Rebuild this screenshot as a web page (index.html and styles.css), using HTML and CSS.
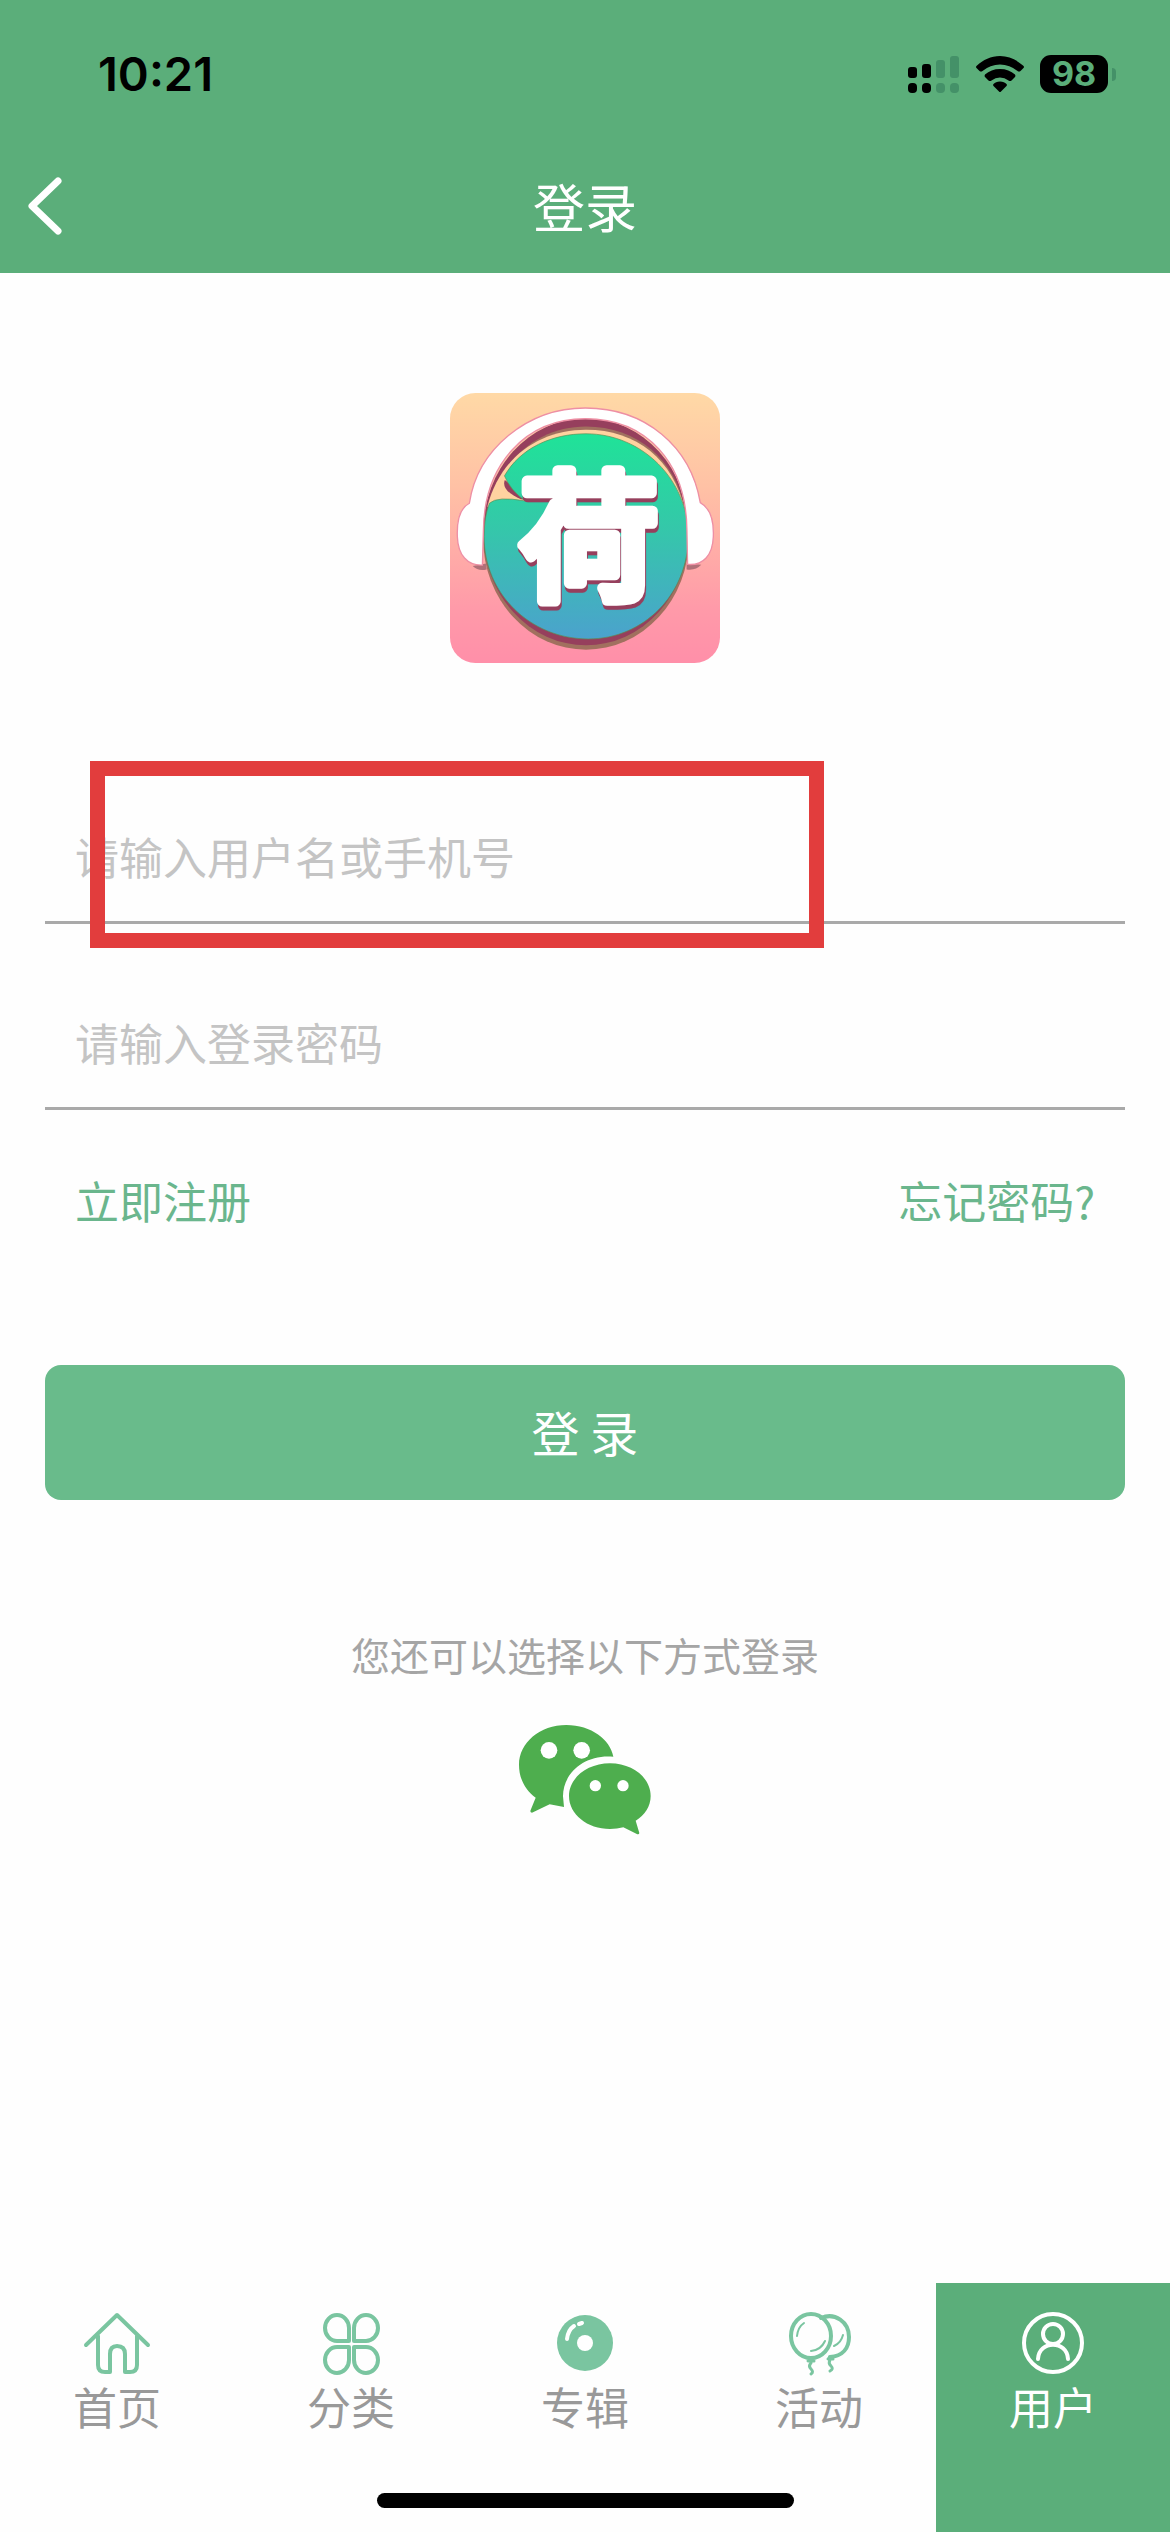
FILE: index.html
```html
<!DOCTYPE html>
<html lang="zh-CN">
<head>
<meta charset="utf-8">
<meta name="viewport" content="width=device-width, initial-scale=1">
<title>登录</title>
<link rel="stylesheet" href="styles.css">
</head>
<body>
<header class="header">
  <div class="status">
    <span class="time">10:21</span>
    <div class="status-icons">
      <svg class="signal" width="52" height="38" viewBox="0 0 52 38" aria-hidden="true">
        <rect x="0" y="12" width="9" height="11" rx="3"/><rect x="14" y="9" width="9" height="14" rx="3"/>
        <rect x="0" y="28" width="9" height="10" rx="4"/><rect x="14" y="28" width="9" height="10" rx="4"/>
        <g fill="#449168"><rect x="28" y="5" width="9" height="18" rx="3"/><rect x="42" y="1" width="9" height="22" rx="3"/><rect x="28" y="28" width="9" height="10" rx="4"/><rect x="42" y="28" width="9" height="10" rx="4"/></g>
      </svg>
      <svg class="wifi" width="48" height="37" viewBox="0 0 48 37" aria-hidden="true">
        <path d="M24 0C33 0 41 4 47 9.500Q49 11 47 12.500L44.500 15Q43 16 41.500 15A27 27 0 0 0 6.500 15Q5 16 3.500 15L1 12.500Q-1 11 1 9.500C7 4 15 0 24 0Z"/>
        <path d="M24 13C30 13 35 15 39 18.500Q40 20 39 21L35.500 24.500Q34 25.500 32.500 24.500A14 14 0 0 0 15.500 24.500Q14 25.500 12.500 24.500L9 21Q8 20 9 18.500C13 15 18 13 24 13Z"/>
        <path d="M24 25.500C27 25.500 29 26.500 30.500 28Q31.500 29 30.500 30L25 35.500Q24 36.500 23 35.500L17.500 30Q16.500 29 17.500 28C19 26.500 21 25.500 24 25.500Z"/>
      </svg>
      <div class="battery"><span class="level">98</span><span class="nub"></span></div>
    </div>
  </div>
  <div class="titlebar">
    <button class="back" type="button" aria-label="返回">
      <svg width="34" height="58" viewBox="0 0 34 58" aria-hidden="true"><path d="M30 4L4 29L30 54" fill="none" stroke="#fff" stroke-width="7" stroke-linecap="round" stroke-linejoin="round"/></svg>
    </button>
    <h1 class="title">登录</h1>
  </div>
</header>

<main class="main">
  <svg class="logo" viewBox="60 70 808 808" role="img" aria-label="荷">
    <defs>
      <linearGradient id="bg" x1="0" y1="0" x2="0" y2="1"><stop offset="0" stop-color="#ffd9a6"/><stop offset=".35" stop-color="#ffc1a5"/><stop offset=".8" stop-color="#ff9aa9"/><stop offset="1" stop-color="#ff8fa9"/></linearGradient>
      <linearGradient id="leaf" x1="0" y1="0" x2="0" y2="1"><stop offset="0" stop-color="#1fe398"/><stop offset=".45" stop-color="#34c8a9"/><stop offset="1" stop-color="#4ba2cd"/></linearGradient>
    </defs>
    <rect x="60" y="70" width="808" height="808" rx="76" fill="url(#bg)"/>
    <path d="M128 588Q145 605 170 598L168 580ZM768 580L768 598Q795 602 812 584Z" fill="#b07078"/>
    <ellipse cx="467" cy="505" rx="308" ry="333" fill="#a1705f"/>
    <ellipse cx="467" cy="485" rx="308" ry="340" fill="#963f5d"/>
    <path d="M185 390C225 250 340 170 467 170C620 170 735 270 762 415L740 470L200 440Z" fill="#a1705f"/>
    <path d="M172 410C210 260 330 180 467 180C620 180 730 270 764 425L740 470L200 440Z" fill="#ffd2a0"/>
    <path d="M224 330Q212 362 272 388L295 390L250 350Z" fill="#963f5d"/>
    <path d="M467 192C635 192 773 330 773 498C773 672 640 806 474 806C300 806 162 670 162 500Q162 440 178 400Q200 378 285 393Q240 360 223 318C270 235 365 192 467 192Z" fill="url(#leaf)" stroke="#5b8f54" stroke-width="2"/>
    <path d="M157 585C112 587 84 555 82 500C80 450 88 415 118 400C142 240 290 115 465 115C645 115 780 230 809 398C840 415 850 450 848 500C846 555 818 587 771 583L769 480C767 280 650 147 465 147C285 147 162 285 160 480Z" fill="#fff" stroke="#ee8fa4" stroke-width="4"/>
    <text class="logo-glyph" x="476" y="658" text-anchor="middle">荷</text>
  </svg>

  <form class="form">
    <div class="field">
      <input class="input" type="text" placeholder="请输入用户名或手机号" aria-label="用户名或手机号">
      <span class="highlight"></span>
    </div>
    <div class="field">
      <input class="input" type="password" placeholder="请输入登录密码" aria-label="登录密码">
    </div>
    <div class="links">
      <a class="link" href="#">立即注册</a>
      <a class="link" href="#">忘记密码?</a>
    </div>
    <button class="submit" type="button">登 录</button>
  </form>

  <p class="hint">您还可以选择以下方式登录</p>
  <button class="wechat" type="button" aria-label="微信登录">
    <svg width="134" height="112" viewBox="535 318 402 336" aria-hidden="true">
      <path fill="#4eae4e" d="M680 321C755 321 812 365 821 416C735 408 670 465 670 535L673 567L630 559L577 584Q570 584 573 576L588 539C555 515 538 480 538 440C538 374 601 321 680 321Z"/>
      <path fill="#4eae4e" d="M811 436C878 436 933 479 933 534C933 565 915 592 888 608L899 645Q898 651 890 647L851 628Q832 633 811 633C743 633 688 589 688 534C688 480 743 436 811 436Z"/>
      <g fill="#fff"><circle cx="628" cy="397" r="25"/><circle cx="726" cy="397" r="25"/><circle cx="767" cy="503" r="17"/><circle cx="850" cy="503" r="17"/></g>
    </svg>
  </button>
</main>

<nav class="tabs">
  <a class="tab" href="#">
    <svg class="icon" viewBox="0 0 72 72" aria-hidden="true"><path d="M5 38L36 8L67 38M17 29V58Q17 65 24 65H29V47Q29 39 36 39Q44 39 44 47V65H49Q56 65 56 58V29"/></svg>
    <span>首页</span>
  </a>
  <a class="tab" href="#">
    <svg class="icon" viewBox="0 0 72 72" aria-hidden="true"><path d="M34 34H22A12 13 0 1 1 34 21ZM39 34H51A12 13 0 1 0 39 21ZM34 40H22A12 13 0 1 0 34 53ZM39 40H51A12 13 0 1 1 39 53Z"/></svg>
    <span>分类</span>
  </a>
  <a class="tab" href="#">
    <svg class="icon" viewBox="0 0 72 72" aria-hidden="true"><circle class="disc" cx="36" cy="36" r="28"/><circle cx="36" cy="36" r="8" fill="#fff" stroke="none"/><path d="M18 32Q19 23 25 19M30 17L33 16" stroke="#fff"/></svg>
    <span>专辑</span>
  </a>
  <a class="tab" href="#">
    <svg class="icon" viewBox="0 0 72 72" aria-hidden="true"><ellipse cx="28" cy="29" rx="20" ry="22"/><path d="M38 11C52 5 66 15 66 30C66 41 60 49 47 50"/><path d="M28 52L25 54H31ZM47 50L45 52H50M28 56Q25 59 28 62T28 67M47 53Q45 56 48 59T47 64" stroke-width="3"/><path d="M14 29Q15 20 21 16M28 44Q38 43 42 34M51 39Q58 36 60 28" stroke-width="2"/></svg>
    <span>活动</span>
  </a>
  <a class="tab active" href="#" aria-current="page">
    <svg class="icon" viewBox="0 0 72 72" aria-hidden="true"><circle cx="36" cy="36" r="29"/><circle cx="36" cy="27" r="10"/><path d="M21 52C22 33 50 33 51 52"/></svg>
    <span>用户</span>
  </a>
  <div class="home-indicator"></div>
</nav>
</body>
</html>
```
FILE: styles.css
```css
* {
  box-sizing: border-box;
}

body {
  margin: 0;
  min-height: 100vh;
  display: flex;
  flex-direction: column;
  background: #fefefe;
  font-family: "Noto Sans CJK SC", sans-serif;
  font-size: 44px;
  line-height: 60px;
}

button,
input {
  font: inherit;
  border: 0;
  padding: 0;
  background: none;
}

a {
  text-decoration: none;
}

svg {
  display: block;
}

.header {
  background: #5bae7a;
}

.status {
  display: flex;
  align-items: center;
  justify-content: space-between;
  height: 148px;
  padding: 0 54px 0 98px;
}

.time {
  font-family: Inter, sans-serif;
  font-size: 47px;
  font-weight: 600;
}

.status-icons {
  display: flex;
  align-items: center;
  gap: 16px;
}

.battery {
  display: flex;
  align-items: center;
  gap: 4px;
}

.level {
  width: 68px;
  height: 38px;
  border-radius: 11px;
  background: #000;
  color: #5bae7a;
  font-family: Inter, sans-serif;
  font-size: 34px;
  font-weight: 700;
  line-height: 38px;
  text-align: center;
}

.nub {
  width: 4px;
  height: 13px;
  border-radius: 0 4px 4px 0;
  background: #449168;
}

.titlebar {
  display: grid;
  grid-template-columns: 1fr auto 1fr;
  align-items: center;
  height: 125px;
  padding: 0 28px 10px;
}

.back {
  width: 34px;
}

.title {
  margin: 0;
  color: #fff;
  font-size: 52px;
  font-weight: 400;
}

.main {
  flex: 1;
  display: flex;
  flex-direction: column;
  align-items: center;
  padding: 120px 45px 60px;
}

.logo {
  width: 270px;
  height: 270px;
}

.logo-glyph {
  fill: #fff;
  stroke: #fff;
  stroke-width: 32px;
  stroke-linejoin: round;
  font-size: 420px;
  font-weight: 500;
  filter: drop-shadow(3px 12px 0 #963f5d);
}

.form {
  align-self: stretch;
  display: flex;
  flex-direction: column;
  margin-top: 132px;
}

.field {
  position: relative;
  margin-bottom: 57px;
}

.input {
  display: block;
  width: 100%;
  height: 129px;
  padding: 0 30px 4px;
  border-bottom: 3px solid #a9a9a9;
  border-radius: 0;
  outline: 0;
}

.input::placeholder {
  color: #c4c4c4;
  opacity: 1;
}

.highlight {
  position: absolute;
  top: -34px;
  left: 45px;
  width: 68%;
  height: 187px;
  border: 15px solid #e23d3d;
  pointer-events: none;
}

.links {
  display: flex;
  justify-content: space-between;
  margin-top: 3px;
  padding: 0 30px;
}

.link {
  color: #6ab68d;
}

.submit {
  height: 135px;
  margin-top: 135px;
  padding-bottom: 4px;
  border-radius: 16px;
  background: #69bb8b;
  color: #fff;
  font-size: 48px;
}

.hint {
  margin: 124px 0 40px;
  color: #a5a5a5;
  font-size: 39px;
}

.tabs {
  position: relative;
  display: grid;
  grid-template-columns: repeat(5, 1fr);
  height: 249px;
}

.tab {
  display: flex;
  flex-direction: column;
  align-items: center;
  padding-top: 24px;
  color: #999;
  line-height: 54px;
}

.icon {
  width: 72px;
  height: 72px;
  fill: none;
  stroke: #7ac5a0;
  stroke-width: 4;
  stroke-linecap: round;
  stroke-linejoin: round;
}

.disc {
  fill: #7ac5a0;
  stroke: none;
}

.active {
  background: #5bae7a;
  color: #fff;
}

.active .icon {
  stroke: #fff;
}

.home-indicator {
  position: absolute;
  bottom: 24px;
  left: 50%;
  width: 417px;
  height: 15px;
  margin-left: -208px;
  border-radius: 8px;
  background: #000;
}
```
